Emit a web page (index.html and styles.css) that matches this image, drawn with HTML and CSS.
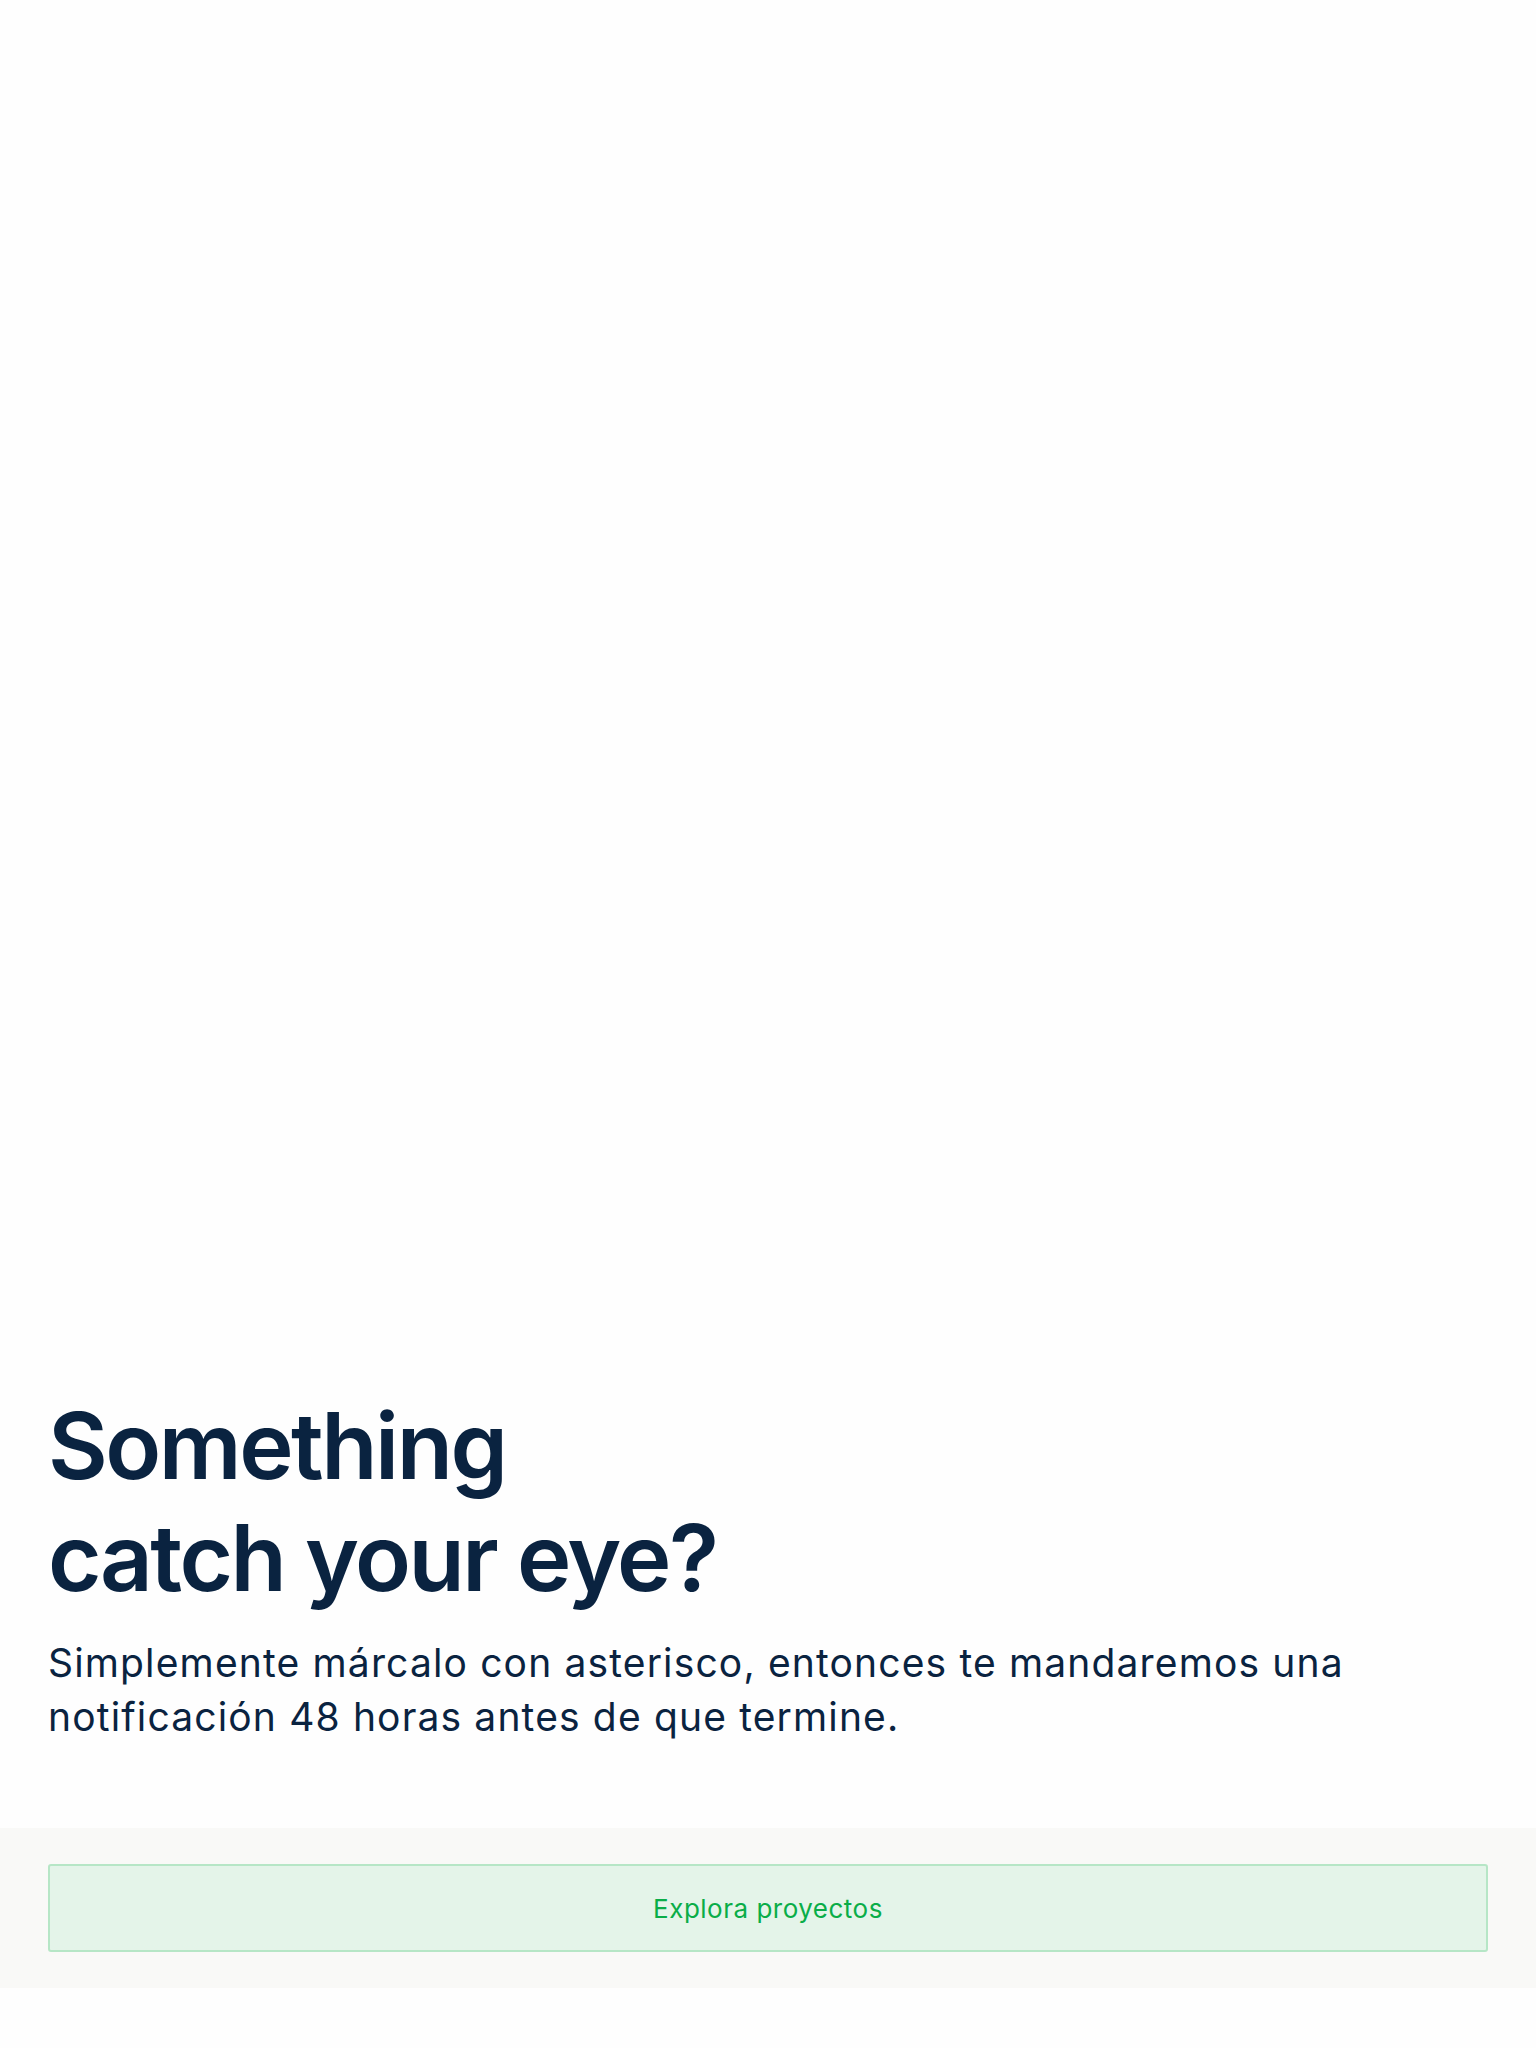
FILE: index.html
```html
<!DOCTYPE html>
<html lang="es">
<head>
<meta charset="utf-8">
<title>Something catch your eye?</title>
<link rel="stylesheet" href="styles.css">
</head>
<body>
<div class="screen">
  <main class="content">
    <h1 class="title">Something<br>catch your eye?</h1>
    <p class="lead">Simplemente márcalo con asterisco, entonces te mandaremos una notificación 48 horas antes de que termine.</p>
  </main>
  <footer class="actions">
    <button class="explore-btn" type="button">Explora proyectos</button>
  </footer>
  <div class="bottom-space"></div>
</div>
</body>
</html>
```

FILE: styles.css
```css
html, body {
  margin: 0;
  padding: 0;
  background: #fefefe;
}

.screen {
  height: 2048px;
  display: flex;
  flex-direction: column;
  font-family: "Inter", "Noto Sans", sans-serif;
}

.content {
  flex: 1;
  display: flex;
  flex-direction: column;
  justify-content: flex-end;
  padding: 0 48px 84px;
}

.title {
  margin: 0;
  font-size: 92px;
  line-height: 112px;
  font-weight: 600;
  letter-spacing: -2.5px;
  color: #0a2340;
}

.lead {
  margin: 22px 0 0;
  max-width: 1320px;
  font-size: 39px;
  line-height: 54px;
  font-weight: 400;
  letter-spacing: 1.15px;
  color: #0a2340;
}

.actions {
  background: #f9f9f7;
  padding: 36px 48px;
}

.explore-btn {
  display: block;
  width: 100%;
  height: 88px;
  box-sizing: border-box;
  background: #e4f4e9;
  border: 2px solid #b6e6c6;
  border-radius: 3px;
  font-family: "Inter", "Noto Sans", sans-serif;
  font-size: 26px;
  letter-spacing: 0.5px;
  color: #0aad48;
  padding: 0;
}

.bottom-space {
  height: 60px;
}
```
